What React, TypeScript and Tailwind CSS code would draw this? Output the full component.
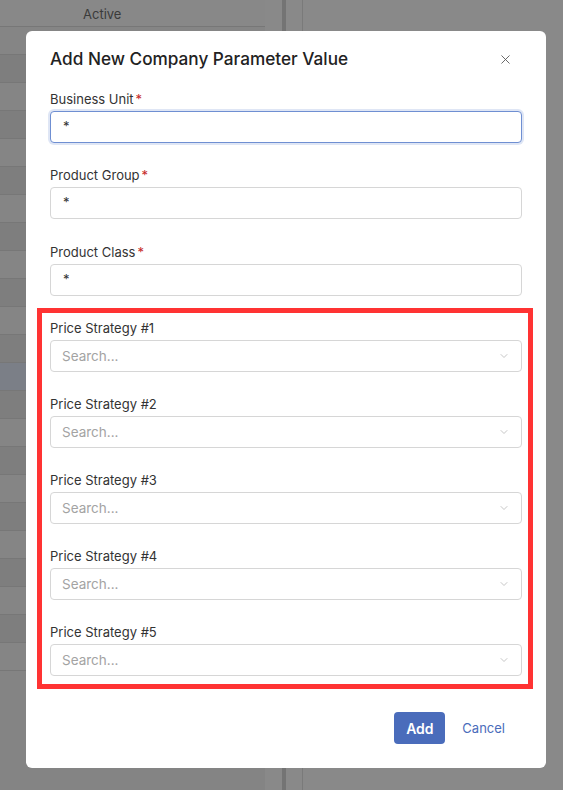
import React from "react";
import { X, ChevronDown } from "lucide-react";

const rows = Array.from({ length: 23 }, (_, i) => i);

function Field({
  label,
  required,
  value,
  focused,
  select,
  className,
}: {
  label: string;
  required?: boolean;
  value?: string;
  focused?: boolean;
  select?: boolean;
  className?: string;
}) {
  return (
    <div className={className}>
      <div className="h-[18px] text-[13px] leading-[18px] text-[#333333] flex items-start">
        <span>{label}</span>
        {required && <span className="ml-[2px] text-[#c62828]">*</span>}
      </div>
      <div
        className={
          "mt-[3px] h-8 rounded-[4px] bg-white flex items-center px-3 text-[13px] " +
          (focused
            ? "border border-[#6f8fd2] shadow-[0_0_0_2px_#dfe6f5]"
            : "border border-[#d6d6d6]")
        }
      >
        {select ? (
          <>
            <span className="flex-1 text-[#a3a3a3] text-[13.5px] -ml-[1px]">Search...</span>
            <ChevronDown size={12} strokeWidth={1.5} className="text-[#b3b3b3] -mr-[1px]" />
          </>
        ) : (
          <span className="text-[#333333]">{value}</span>
        )}
      </div>
    </div>
  );
}

export default function App() {
  return (
    <div
      className="relative h-[790px] w-[563px] overflow-hidden bg-[#898989]"
      style={{ fontFamily: "Inter, 'Noto Sans', sans-serif" }}
    >
      {/* background page */}
      <div className="flex h-full">
        <div className="w-[265px] h-full bg-[#848484] shadow-[1px_0_2px_rgba(0,0,0,0.15)]">
          <div className="h-[27px] border-b border-[#777777] bg-[#888888] flex items-center pt-[3px] pl-[83px] text-[13px] text-[#3b3b3b]">
            Active
          </div>
          {rows.map((i) => (
            <div
              key={i}
              className={
                "h-[28px] border-b border-[#777777] " +
                (i === 12 ? "bg-[#7b7f87]" : i % 2 === 0 ? "bg-[#858585]" : "bg-[#7e7e7e]")
              }
            />
          ))}
        </div>
        <div className="w-[17px] h-full bg-[#898989]" />
        <div className="w-[4px] h-full bg-[#747474]" />
        <div className="w-[16px] h-full bg-[#898989]" />
        <div className="flex-1 h-full border-l border-[#7a7a7a] bg-[#898989]" />
      </div>

      {/* modal */}
      <div className="absolute left-[26px] top-[31px] w-[520px] h-[737px] bg-white rounded-[6px] px-6 pt-4 pb-6 flex flex-col">
        <div className="h-6 flex items-center justify-between">
          <h2 className="text-[17.2px] leading-6 font-medium text-[#222222]">
            Add New Company Parameter Value
          </h2>
          <X size={15} strokeWidth={1.4} className="text-[#555555] mr-[9px]" />
        </div>

        <div className="mt-[19px]">
          <Field label="Business Unit" required value="*" focused className="mb-[23px]" />
          <Field label="Product Group" required value="*" className="mb-[24px]" />
          <Field label="Product Class" required value="*" className="mb-[23px]" />
          <div className="relative">
            <div className="pointer-events-none absolute -top-[11px] -left-[13px] -right-[11px] -bottom-[13px] border-[5px] border-[#ff3333]" />
            <Field label="Price Strategy #1" select className="mb-[23px]" />
            <Field label="Price Strategy #2" select className="mb-[23px]" />
            <Field label="Price Strategy #3" select className="mb-[23px]" />
            <Field label="Price Strategy #4" select className="mb-[23px]" />
            <Field label="Price Strategy #5" select />
          </div>
        </div>

        <div className="mt-[36px] flex justify-end items-center">
          <button className="h-8 w-[51px] rounded-[4px] bg-[#4a6cbb] text-white text-[14px] font-semibold">
            Add
          </button>
          <span className="ml-[17px] mr-[17px] mt-[1px] text-[13px] text-[#4a6cbb]">Cancel</span>
        </div>
      </div>
    </div>
  );
}
